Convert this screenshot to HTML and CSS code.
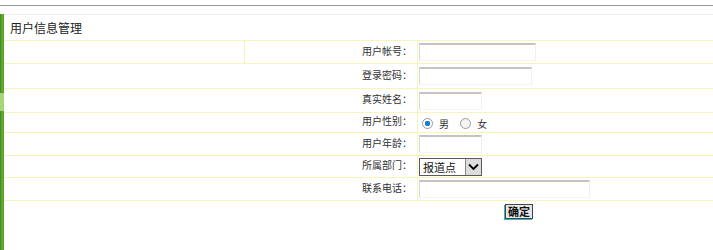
FILE: index.html
```html
<!DOCTYPE html>
<html lang="zh-CN">
<head>
  <meta charset="UTF-8" />
  <title>用户信息管理</title>
  <link rel="stylesheet" href="styles.css">
</head>
<body>
  <div class="topline"></div>

  <div class="main">
    <div class="sidebar"><div class="sidebar-light"></div></div>

    <div class="content">
      <div class="title">用户信息管理</div>

      <form class="user-form">
        <table class="form-table">
          <tr>
            <td class="blank"></td>
            <td class="label">用户帐号：</td>
            <td class="field"><input type="text" class="txt w-long" /></td>
          </tr>
          <tr class="row-tall">
            <td class="blank nodiv"></td>
            <td class="label">登录密码：</td>
            <td class="field"><input type="password" class="txt w-mid" /></td>
          </tr>
          <tr class="row-mid">
            <td class="blank nodiv"></td>
            <td class="label">真实姓名：</td>
            <td class="field"><input type="text" class="txt w-short" /></td>
          </tr>
          <tr class="row-low">
            <td class="blank nodiv"></td>
            <td class="label">用户性别：</td>
            <td class="field">
              <label class="radio"><input type="radio" name="sex" checked /> 男</label>
              <label class="radio"><input type="radio" name="sex" /> 女</label>
            </td>
          </tr>
          <tr>
            <td class="blank nodiv"></td>
            <td class="label">用户年龄：</td>
            <td class="field"><input type="text" class="txt w-short" /></td>
          </tr>
          <tr class="row-small">
            <td class="blank nodiv"></td>
            <td class="label">所属部门：</td>
            <td class="field">
              <span class="select-box">
                <select>
                  <option>报道点</option>
                </select>
                <span class="arrow">
                  <svg width="11" height="8" viewBox="0 0 11 8"><path d="M1 1.5 L5.5 6 L10 1.5" fill="none" stroke="#000" stroke-width="1.8"/></svg>
                </span>
              </span>
            </td>
          </tr>
          <tr>
            <td class="blank nodiv"></td>
            <td class="label">联系电话：</td>
            <td class="field"><input type="text" class="txt w-phone" /></td>
          </tr>
        </table>

        <div class="actions">
          <button type="submit">确定</button>
        </div>
      </form>
    </div>
  </div>
</body>
</html>
```

FILE: styles.css
```css
body {
  margin: 0;
  font-family: "Noto Sans CJK SC", "Liberation Sans", sans-serif;
  background: #ffffff;
  color: #333333;
}
.topline {
  margin-top: 5px;
  height: 1px;
  background: #9a9a9a;
}
.main {
  display: flex;
  margin-top: 8px;
  min-height: 236px;
}
.sidebar {
  width: 4px;
  background: linear-gradient(90deg, #3f8a1e, #6aae35 60%, #4f9626);
  padding-top: 79px;
}
.sidebar-light {
  height: 18px;
  background: #a6d67a;
}
.content {
  flex: 1;
}
.title {
  height: 25px;
  line-height: 25px;
  padding-left: 6px;
  border-top: 1px solid #f0f0f0;
  font-size: 12px;
  color: #222222;
}

/* tabla del formulario */
.form-table {
  width: 100%;
  border-collapse: collapse;
}
.form-table td {
  height: 18px;
  padding: 0;
  border-top: 1px solid #f6f6bc;
  border-bottom: 1px solid #f6f6bc;
}
.form-table .row-tall td { height: 20px; }
.form-table .row-mid td { height: 19px; }
.form-table .row-low td { height: 15px; }
.form-table .row-small td { height: 17px; }
.form-table td.blank {
  width: 240px;
  border-right: 1px solid #f6f6bc;
}
.form-table td.nodiv {
  border-right: none;
}
.form-table td.label {
  width: 167px;
  padding: 0 5px 4px 0;
  text-align: right;
  font-size: 10px;
  color: #333333;
  border-right: 1px solid #f6f6bc;
}
.form-table td.field {
  padding: 0 0 0 1px;
  font-size: 10px;
}
.txt {
  box-sizing: border-box;
  height: 18px;
  margin: 0;
  padding: 0 2px;
  vertical-align: middle;
  border-top: 2px solid #c4c4c4;
  border-left: 1px solid #d8d8d8;
  border-right: 1px solid #f0f0f0;
  border-bottom: 1px solid #f4f4f4;
  background: #ffffff;
  outline: none;
}
.w-long { width: 117px; }
.w-mid { width: 113px; }
.w-short { width: 63px; }
.w-phone { width: 171px; }

.radio {
  display: inline-flex;
  align-items: center;
  gap: 4px;
  margin-left: 3px;
  margin-right: 6px;
  font-size: 10px;
  vertical-align: middle;
}
.radio input {
  appearance: none;
  width: 11px;
  height: 11px;
  margin: 0 2px 0 0;
  border: 1px solid #9a9a9a;
  border-radius: 50%;
  background: #f4f4f4;
}
.radio input:checked {
  background: radial-gradient(circle, #1a7fd0 0 2.5px, #ffffff 3px);
}

.select-box {
  display: inline-flex;
  align-items: stretch;
  height: 18px;
  width: 63px;
  box-sizing: border-box;
  border: 1px solid #5a5a5a;
  vertical-align: middle;
  background: #ffffff;
}
.select-box select {
  appearance: none;
  flex: 1;
  min-width: 0;
  border: none;
  padding: 0 0 0 3px;
  font-family: inherit;
  font-size: 11px;
  color: #111111;
  background: transparent;
  outline: none;
}
.select-box .arrow {
  width: 15px;
  display: flex;
  align-items: center;
  justify-content: center;
  background: #dcdcdc;
  border-left: 1px solid #8a8a8a;
}

.actions {
  display: flex;
  padding: 3px 0 0 501px;
}
.actions button {
  height: 15px;
  padding: 0 2px;
  font-family: inherit;
  font-size: 11px;
  font-weight: bold;
  line-height: 11px;
  color: #111111;
  background: #e6e6e6;
  border: 1px solid #444444;
  box-shadow: -1px 1px 0 #35b6c8;
  cursor: pointer;
}
```
